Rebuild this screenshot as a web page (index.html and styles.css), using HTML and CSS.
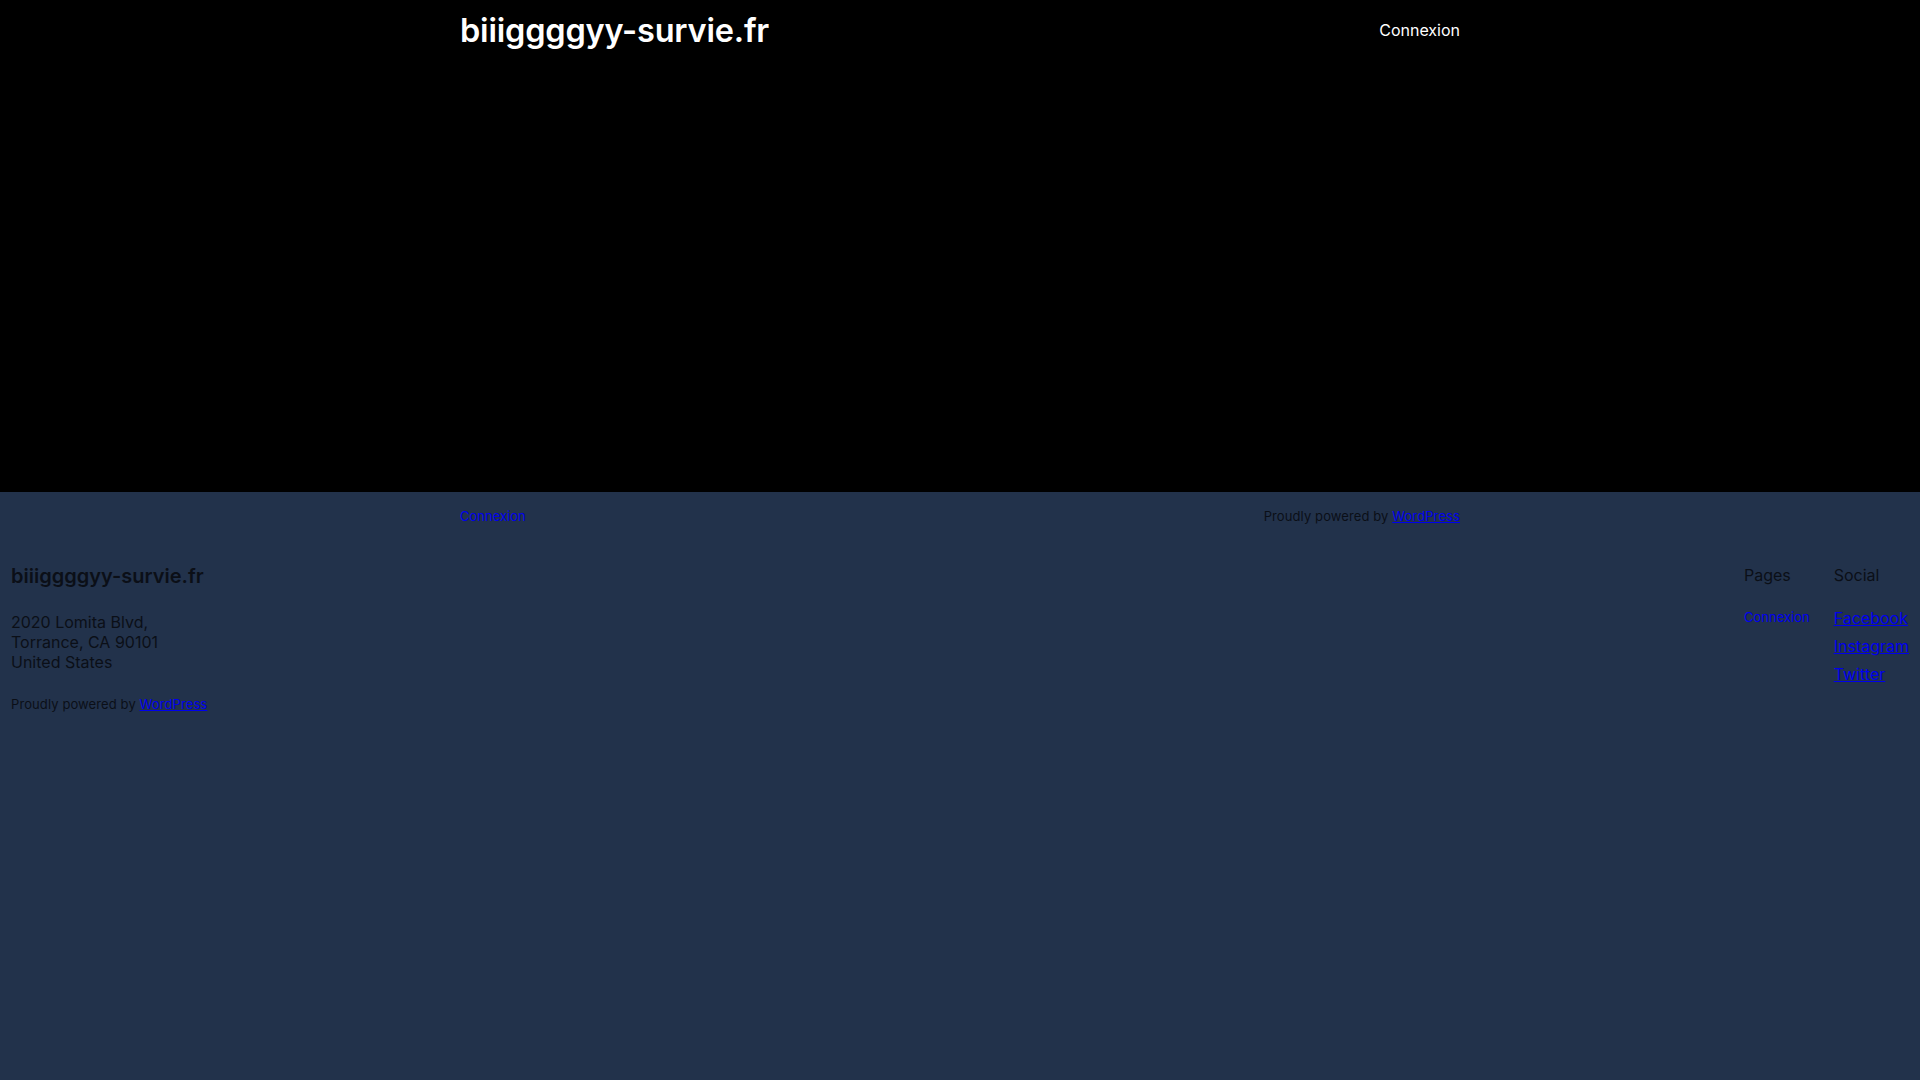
FILE: index.html
```html
<!DOCTYPE html>
<html lang="fr">
<head>
<meta charset="utf-8">
<title>biiiggggyy-survie.fr</title>
<link rel="stylesheet" href="styles.css">
</head>
<body>
<header class="hero">
  <div class="wrap header-row">
    <a class="site-title">biiiggggyy-survie.fr</a>
    <nav class="top-nav"><a>Connexion</a></nav>
  </div>
</header>
<div class="strip">
  <div class="wrap strip-row">
    <a class="strip-link" href="#">Connexion</a>
    <p class="powered">Proudly powered by <a href="#">WordPress</a></p>
  </div>
</div>
<footer class="site-footer">
  <div class="brand">
    <h2 class="foot-title">biiiggggyy-survie.fr</h2>
    <p class="address">2020 Lomita Blvd,<br>Torrance, CA 90101<br>United States</p>
    <p class="powered">Proudly powered by <a href="#">WordPress</a></p>
  </div>
  <div class="cols">
    <div class="col">
      <h3 class="col-title">Pages</h3>
      <a class="small-link" href="#">Connexion</a>
    </div>
    <div class="col">
      <h3 class="col-title">Social</h3>
      <ul class="social">
        <li><a href="#">Facebook</a></li>
        <li><a href="#">Instagram</a></li>
        <li><a href="#">Twitter</a></li>
      </ul>
    </div>
  </div>
</footer>
</body>
</html>
```
FILE: styles.css
```css
html, body {
  margin: 0;
  padding: 0;
}
body {
  background: #22324b;
  font-family: Inter, "Noto Sans", sans-serif;
  color: #0b0f17;
  min-height: 1080px;
}
a { color: #0000ee; }
.wrap {
  width: 1000px;
  margin: 0 auto;
}
.hero {
  background: #000;
  height: 492px;
}
.header-row {
  display: flex;
  justify-content: space-between;
  align-items: center;
  height: 60px;
}
.site-title {
  color: #fff;
  font-size: 32.5px;
  font-weight: 600;
  letter-spacing: -0.2px;
  text-decoration: none;
}
.top-nav a {
  color: #fff;
  font-size: 16px;
  text-decoration: none;
}
.strip-row {
  display: flex;
  justify-content: space-between;
  align-items: center;
  height: 48px;
}
.strip-link {
  font-size: 13px;
  text-decoration: none;
}
.powered {
  margin: 0;
  font-size: 13px;
  letter-spacing: 0.1px;
}
.site-footer {
  display: flex;
  justify-content: space-between;
  padding: 21px 11px 0 11px;
}
.foot-title {
  margin: 0;
  font-size: 20px;
  font-weight: 600;
  line-height: 30px;
}
.address {
  margin: 21px 0 0;
  font-size: 16px;
  line-height: 20px;
}
.brand .powered {
  margin-top: 24px;
}
.cols {
  display: flex;
  gap: 24px;
}
.col {
  display: flex;
  flex-direction: column;
}
.col-title {
  margin: 0;
  font-size: 16px;
  font-weight: 400;
  line-height: 28px;
}
.small-link {
  margin-top: 20px;
  font-size: 13px;
  text-decoration: none;
}
.social {
  list-style: none;
  margin: 15px 0 0;
  padding: 0;
}
.social li {
  font-size: 16px;
  line-height: 28px;
}
```
